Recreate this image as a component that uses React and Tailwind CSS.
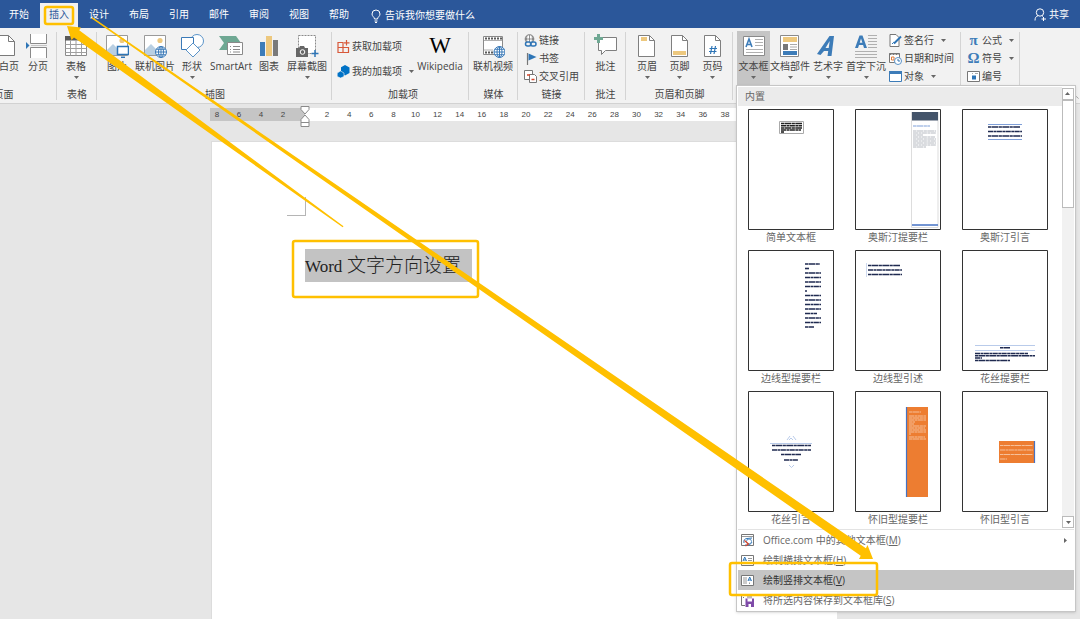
import { ChevronUp } from 'lucide-react';
import clsx from 'clsx';

const TABS = ['开始', '插入', '设计', '布局', '引用', '邮件', '审阅', '视图', '帮助'];
const LEFT_TICKS = [8, 6, 4, 2];
const RIGHT_TICKS = Array.from({ length: 19 }, (_, i) => (i + 1) * 2);

/* ---------- icons ---------- */

const Big = ({ children }) => (
  <svg viewBox="0 0 24 24" className="w-6 h-6 shrink-0" fill="none" aria-hidden="true">{children}</svg>
);

const Small = ({ children }) => (
  <svg viewBox="0 0 13 13" className="w-[13px] h-[13px] shrink-0" fill="none" aria-hidden="true">{children}</svg>
);

const Globe = ({ x, y, r = 5.5 }) => (
  <g transform={`translate(${x} ${y})`} stroke="#3b7ab8" strokeWidth="1">
    <circle r={r} fill="#fff" />
    <ellipse rx={r / 2.2} ry={r} />
    <path d={`M${-r} 0H${r}M0 ${-r}V${r}M${-r * 0.85} ${-r / 2}H${r * 0.85}M${-r * 0.85} ${r / 2}H${r * 0.85}`} />
  </g>
);

const BlankPageIcon = () => (
  <Big><path d="M1.500 1.500h10l6 6v14h-16z" fill="#fff" stroke="#7a7a7a" /><path d="M11.500 1.500v6h6" stroke="#7a7a7a" /></Big>
);

const PageBreakIcon = () => (
  <Big>
    <path d="M4.500 0v9.500h16V0M4.500 24v-10.500h16V24" fill="#fff" stroke="#8a8a8a" />
    <path d="M0 8l3.500 3.500L0 15z" fill="#2e75b6" />
    <path d="M5 11.500h16" stroke="#c5c5c5" />
  </Big>
);

const TableIcon = () => (
  <Big>
    <path d="M1.500 2.500h21v19h-21z" fill="#fff" stroke="#8a8a8a" />
    <path d="M1 2h22v4.500H1z" fill="#595959" />
    <path d="M1.500 10.500h21M1.500 14.500h21M1.500 18.500h21M6.500 6v15.500M12 6v15.500M17.500 6v15.500" stroke="#a0a0a0" />
  </Big>
);

const Picture = () => (
  <>
    <path d="M1.500 1.500h21v20h-21z" fill="#fff" stroke="#9a9a9a" />
    <circle cx="17" cy="6.500" r="2.600" fill="#edc87e" />
    <path d="M2 21v-5l6-6 7 7v4z" fill="#b9cfe2" />
  </>
);

const PictureIcon = () => (
  <Big>
    <Picture />
    <path d="M12.500 12.500h11v8h-11z" fill="#fff" stroke="#2e75b6" strokeWidth="1.500" />
    <path d="M16 23.300h4" stroke="#2e75b6" strokeWidth="1.500" />
  </Big>
);

const OnlinePictureIcon = () => <Big><Picture /><Globe x={18} y={18} /></Big>;

const ShapesIcon = () => (
  <Big>
    <circle cx="17" cy="7" r="6.500" fill="#fff" stroke="#5a93c8" />
    <path d="M1.500 3.500h12v12h-12z" fill="#fff" stroke="#3b7ab8" />
    <path d="M13 9l7 7-7 7-7-7z" fill="#fff" stroke="#5a93c8" />
  </Big>
);

const SmartArtIcon = () => (
  <Big>
    <path d="M0 2h17l5 7-5 7H0l5-7z" fill="#6fa893" />
    <path d="M8.500 8.500h15v12h-15z" fill="#fff" stroke="#8a8a8a" />
    <path d="M11 12.500h1M14 12.500h7M11 15.500h1M14 15.500h7M11 18h1M14 18h7" stroke="#8a8a8a" />
  </Big>
);

const ChartIcon = () => (
  <Big>
    <path d="M3 8h5v14H3z" fill="#3d7cb8" />
    <path d="M9 2h6v20H9z" fill="#edc87e" />
    <path d="M16 6h5v16h-5z" fill="#7a7a7a" />
  </Big>
);

const ScreenshotIcon = () => (
  <Big>
    <path d="M3.500 1.500h17v18h-17z" fill="#fff" stroke="#8a8a8a" strokeDasharray="2 1" />
    <path d="M1 14h3l1-2h4l1 2h3v9H1z" fill="#666" />
    <circle cx="7.500" cy="18" r="2.300" fill="#666" stroke="#fff" />
    <path d="M20 16v7M16.500 19.500h7" stroke="#2e75b6" strokeWidth="1.500" />
  </Big>
);

const StoreIcon = () => (
  <Small>
    <path d="M1 2.500h5v10H1zM1 7.500h10.500v5H1M6 7.500v5h5.500v-5" stroke="#d8593a" strokeWidth="1.200" />
    <path d="M9.500 0v5.500M7 2.800h5.500" stroke="#d8593a" strokeWidth="1.200" />
  </Small>
);

const MyAddinsIcon = () => (
  <Small>
    <path d="M8 0l4.500 2.500v5.500L8 10.500 4 8.300V2.300z" fill="#0072c6" />
    <path d="M3.500 6L7 8v3.500L3.500 13 .200 11.500V8z" fill="#0072c6" stroke="#f2f2f2" strokeWidth=".6" />
  </Small>
);

const OnlineVideoIcon = () => (
  <Big>
    <path d="M2.500 2.500h19v18h-19z" fill="#fff" stroke="#8a8a8a" />
    <path d="M4 4.500h17M4 18.500h9" stroke="#595959" strokeWidth="2" strokeDasharray="2 1" />
    <path d="M3 6.500h18M3 16h9" stroke="#b0b0b0" />
    <Globe x={18.5} y={18} />
  </Big>
);

const LinkIcon = () => (
  <Small>
    <circle cx="5.500" cy="5" r="4.300" fill="#fff" stroke="#777" />
    <path d="M1 5h9M5.500 1v8M3 1.500q-1 3.500 0 7M8 1.500q1 3.500 0 7" stroke="#777" strokeWidth=".8" />
    <rect x="1.500" y="8" width="5.500" height="4" rx="2" stroke="#2e75b6" strokeWidth="1.500" fill="#f2f2f2" />
    <rect x="6.500" y="8" width="5.500" height="4" rx="2" stroke="#2e75b6" strokeWidth="1.500" />
  </Small>
);

const BookmarkIcon = () => (
  <Small><path d="M3.500 1v12" stroke="#777" strokeWidth="1.200" /><path d="M4.500 1.500l8 3.500-8 3.500z" fill="#2e75b6" /></Small>
);

const CrossRefIcon = () => (
  <Small>
    <path d="M.500.500h8v9h-8z" fill="#fff" stroke="#777" />
    <path d="M5.500 4.500h5l2 2v6h-7z" fill="#fff" stroke="#777" />
    <path d="M3 5h3M7.500 9.500h3" stroke="#d8472b" strokeWidth="1.700" />
  </Small>
);

const CommentIcon = () => (
  <Big>
    <path d="M4.500 3.500h18v13h-11l-4 4v-4h-3z" fill="#fff" stroke="#7f7f7f" />
    <path d="M4.500 0v9M0 4.500h9" stroke="#6fa893" strokeWidth="3" />
  </Big>
);

const PageShape = ({ children }) => (
  <Big>
    <path d="M3.500 1.500h11l5 5v16h-16z" fill="#fff" stroke="#7f7f7f" />
    <path d="M14.500 1.500v5h5" stroke="#7f7f7f" />
    {children}
  </Big>
);

const HeaderIcon = () => <PageShape><path d="M6 3h6v4H6z" fill="#edc87e" /></PageShape>;
const FooterIcon = () => <PageShape><path d="M5 17h13v4H5z" fill="#edc87e" /></PageShape>;
const PageNumberIcon = () => (
  <PageShape><path d="M11 12l-1.500 8M14.500 12L13 20M8.500 14.500H16M8 17.500h7.500" stroke="#2e75b6" strokeWidth="1.200" /></PageShape>
);

const TextBoxIcon = () => (
  <Big>
    <path d="M1.500 2.500h21v19h-21z" fill="#fff" stroke="#8a8a8a" />
    <path d="M4 13L7 5l3 8M5 10.500h4" stroke="#3d7cb8" strokeWidth="1.600" />
    <path d="M13 5.500h8M13 8.500h8M13 11.500h8M4 15.500h17M4 18.500h17" stroke="#b0b0b0" />
  </Big>
);

const QuickPartsIcon = () => (
  <Big>
    <path d="M2.500 1.500h18v21h-18z" fill="#fff" stroke="#8a8a8a" />
    <path d="M5 3h14v5H5z" fill="#edc87e" />
    <path d="M5 10h5v6H5z" fill="#777" />
    <path d="M12 10.500h7M12 13h7M12 15.500h7" stroke="#aaa" />
    <path d="M5 17h14v4H5z" fill="#3d7cb8" />
  </Big>
);

const WordArtIcon = () => (
  <Big>
    <path d="M1 20L13.500 2H18l-2.500 20h-4l.700-5H8l-3.500 4zM9.500 14h3.200l1-7z" fill="#3d7cb8" fillRule="evenodd" />
  </Big>
);

const DropCapIcon = () => (
  <Big>
    <path d="M1 14L5.500 1.500h3L13 14h-3l-.900-3H5l-1 3zM5.700 8.700h2.700L7 4.500z" fill="#3d7cb8" fillRule="evenodd" />
    <path d="M14 1.500h9M14 4.500h9M14 7.500h9M14 10.500h9M14 13.500h9M1 17.500h22M1 20.500h22M1 23.500h22" stroke="#b0b0b0" />
  </Big>
);

const SignatureIcon = () => (
  <Small>
    <path d="M1 .500h6l3 3v9H1z" fill="#fff" stroke="#777" />
    <path d="M3 10q2-3 3-1" stroke="#2e75b6" />
    <path d="M5 9.500L12 2.500" stroke="#2e75b6" strokeWidth="2" />
  </Small>
);

const DateIcon = () => (
  <Small>
    <path d="M.500 1.500h10v9H.500z" fill="#fff" stroke="#777" />
    <path d="M.500 2h10" stroke="#777" strokeWidth="2" strokeDasharray="2 1" />
    <path d="M2.500 5h2.500v3H2.500z" stroke="#e07b39" />
    <circle cx="9" cy="9" r="3.500" fill="#fff" stroke="#5a93c8" />
    <path d="M9 7v2h2" stroke="#2e75b6" />
  </Small>
);

const ObjectIcon = () => (
  <Small><path d="M.500 1.500h12v10H.500z" fill="#fff" stroke="#3d7cb8" /><path d="M0 1h13v3H0z" fill="#3d7cb8" /></Small>
);

const NumberIcon = () => (
  <Small>
    <path d="M.500 1.500h12v10H.500z" fill="#fff" stroke="#777" />
    <path d="M5 3.500h1M8 3.500h3" stroke="#aaa" />
    <path d="M5 5.500h4v4H5z" fill="#2e75b6" />
  </Small>
);

const Glyph = ({ children }) => (
  <span className="w-[13px] text-center font-['Liberation_Serif',serif] text-[15px] leading-none font-bold text-[#3d7cb8]">{children}</span>
);

const OfficeIcon = () => (
  <Small>
    <path d="M.500.500h12v11H.500z" fill="#fff" stroke="#777" />
    <path d="M1 2.500h11" stroke="#999" />
    <path d="M3 9q-1-4 3-4.500l5-.500M4 11q5 1 7-3" stroke="#2e75b6" />
    <circle cx="8" cy="7.500" r="2.500" stroke="#5a93c8" />
    <path d="M3.500 6.500l4 3.500-3 2" stroke="#d8472b" strokeWidth="1.200" />
  </Small>
);

const HorizontalBoxIcon = () => (
  <Small>
    <path d="M.500 1.500h12v10H.500z" fill="#fff" stroke="#777" />
    <path d="M2 7l1.700-4L5.500 7M2.500 6H5" stroke="#2e75b6" />
    <path d="M7 4.500h4M7 6.500h4M2 9h9" stroke="#999" />
  </Small>
);

const VerticalBoxIcon = () => (
  <Small>
    <path d="M.500 1.500h12v10H.500z" fill="#fff" stroke="#777" />
    <path d="M7 7l1.700-4 1.800 4M7.500 6H10" stroke="#2e75b6" />
    <path d="M3 3v7M5 3v7M8.500 8.500V10" stroke="#999" />
  </Small>
);

const SaveIcon = () => (
  <Small>
    <path d="M4 .500H.500v11H4M6 1h5M6 3h5M2 3.500h1" stroke="#777" />
    <path d="M4.500 4.500H13V13H4.500z" fill="#7f4ba8" />
    <path d="M6.500 4.500h4.500v3H6.500zM7.500 10h2.500v3H7.500z" fill="#fff" />
  </Small>
);

/* ---------- ribbon parts ---------- */

const Caret = () => (
  <svg viewBox="0 0 5 3" className="w-[5px] h-[3px] shrink-0" aria-hidden="true"><path d="M0 0h5L2.500 3z" fill="#666" /></svg>
);

function BigButton({ icon, label, caret, className = 'w-[38px]', active }) {
  return (
    <button className={clsx('flex flex-col items-center pt-[3px] h-[55px] shrink-0', className, active && 'bg-[#c5c5c5]')}>
      {icon}
      <span className="mt-[1px] h-[14px] leading-[14px]">{label}</span>
      {caret && <span className="mt-[3px]"><Caret /></span>}
    </button>
  );
}

function SmallButton({ icon, label, caret }) {
  return (
    <button className="flex items-center gap-[2px] h-[18px] leading-[18px]">
      {icon}
      <span>{label}</span>
      {caret && <span className="ml-[5px]"><Caret /></span>}
    </button>
  );
}

function Group({ label, className, children }) {
  return (
    <section aria-label={label} className={clsx('relative shrink-0 flex flex-col', className)}>
      <div className="flex h-[55px]">{children}</div>
      <div className="h-[16px] leading-[16px] text-center">{label}</div>
      <span className="absolute right-0 top-[1px] h-[68px] w-px bg-[#d4d4d4]" />
    </section>
  );
}

/* ---------- gallery ---------- */

// rows of tiny dashes standing in for preview text
const Lines = ({ rows, color = '#1f2a50', w = 1.6 }) =>
  rows.map(([x1, x2, y], i) => (
    <path key={i} d={`M${x1} ${y}H${x2}`} stroke={color} strokeWidth={w} strokeDasharray={i % 2 ? '5 .5 3 .4' : '3 .4 7 .5'} />
  ));

const GALLERY = [
  {
    name: '简单文本框',
    art: (
      <>
        <path d="M31.500 12.500h24v12h-24z" fill="#fff" stroke="#aaa" />
        <Lines color="#222" rows={[[33, 54, 14.500], [33, 54, 16.800], [33, 54, 19], [33, 53, 21], [33, 36, 23]]} />
      </>
    ),
  },
  {
    name: '奥斯汀提要栏',
    art: (
      <>
        <path d="M56.500 3v115.500h26.500V3" fill="#fff" stroke="#ddd" />
        <path d="M57 3h26v8.500H57z" fill="#44546a" />
        <Lines color="#a9c0e6" rows={[[58, 75, 17]]} />
        <Lines color="#b5b9c0" w={1} rows={[[58, 81, 22], [58, 81, 24], [58, 68, 26], [58, 80, 28], [58, 81, 30], [58, 81, 32], [58, 81, 34], [58, 81, 36], [58, 71, 38]]} />
        <path d="M57 116h26" stroke="#4472c4" strokeWidth="1.500" />
      </>
    ),
  },
  {
    name: '奥斯汀引言',
    art: (
      <>
        <path d="M26 15.500h34M26 30.500h34" stroke="#7f9fd8" />
        <Lines rows={[[26, 58, 18], [26, 60, 22.500], [26, 60, 27]]} />
      </>
    ),
  },
  {
    name: '边线型提要栏',
    art: (
      <Lines
        rows={[
          [57, 72, 14], [57, 61, 18.500], [57, 73, 23], [57, 73, 27.500], [57, 73, 32], [57, 73, 36.500], [57, 59, 41], [57, 73, 45.500],
          [57, 73, 50], [57, 73, 54.500], [57, 73, 59], [57, 69, 63.500], [57, 73, 68], [57, 73, 72.500], [57, 66, 77],
        ]}
      />
    ),
  },
  {
    name: '边线型引述',
    art: (
      <>
        <path d="M11.500 13v14" stroke="#cdd9ef" />
        <Lines rows={[[13, 45, 15.500], [13, 47, 20], [13, 47, 24.500]]} />
      </>
    ),
  },
  {
    name: '花丝提要栏',
    art: (
      <>
        <path d="M13 95.500h60M13 100.500h60" stroke="#b9cbea" />
        <Lines rows={[[38, 48, 97.800], [13, 66, 103.500], [13, 73, 105.800], [13, 20, 108], [13, 48, 110.500]]} />
      </>
    ),
  },
  {
    name: '花丝引言',
    art: (
      <>
        <path d="M39 49l3-4M48 49l-3-4M41 49l2-2 2 2M22 52.500h42M41 74l2.500 2.500L46 74" stroke="#b9cbea" />
        <Lines rows={[[24, 63, 54.500], [24, 63, 59], [33, 53, 63.500], [36, 50, 69]]} />
      </>
    ),
  },
  {
    name: '怀旧型提要栏',
    art: (
      <>
        <path d="M51 16h22v90H51z" fill="#ed7d31" />
        <path d="M51.500 16v90" stroke="#4472c4" strokeWidth="1.200" />
        <Lines color="#f6c09a" w={1} rows={[[54, 66, 21], [54, 71, 25], [54, 71, 27], [54, 71, 29], [54, 60, 31], [54, 59, 33], [54, 71, 35], [54, 70, 37], [54, 71, 39], [54, 71, 41], [54, 56, 43], [54, 70, 46], [54, 71, 48]]} />
      </>
    ),
  },
  {
    name: '怀旧型引言',
    art: (
      <>
        <path d="M37 50h36v22H37z" fill="#ed7d31" />
        <path d="M72.500 50v22" stroke="#4472c4" strokeWidth="1.200" />
        <Lines color="#f6c09a" w={1} rows={[[38, 71, 54.500], [38, 71, 59], [38, 71, 63.500], [38, 45, 68]]} />
      </>
    ),
  },
];

const MENU = [
  { icon: <OfficeIcon />, text: 'Office.com 中的其他文本框', hot: 'M', more: true },
  { icon: <HorizontalBoxIcon />, text: '绘制横排文本框', hot: 'H' },
  { icon: <VerticalBoxIcon />, text: '绘制竖排文本框', hot: 'V', selected: true },
  { icon: <SaveIcon />, text: '将所选内容保存到文本框库', hot: 'S' },
];

function TextBoxMenu() {
  return (
    <div className="absolute left-[-1px] top-[54px] z-10 w-[340px] bg-white border border-[#c6c6c6] shadow-sm p-[1px] text-[#666]">
      <div className="flex border-b border-[#e3e3e3]">
        <div className="flex-1">
          <h2 className="h-[19px] leading-[18px] pl-[7px] bg-[#ebebeb]">内置</h2>
          <div className="flex flex-wrap gap-x-[21px] gap-y-[6px] pt-[3px] pl-[10px] pb-[3px]">
            {GALLERY.map(({ name, art }) => (
              <button key={name} className="flex flex-col w-[86px] h-[135px]">
                <svg viewBox="0 0 86 121" className="w-[86px] h-[121px]" fill="none" aria-hidden="true">
                  <path d="M.500.500h85v120H.500z" fill="#fff" stroke="#333" />
                  {art}
                </svg>
                <span className="w-full leading-[14px]">{name}</span>
              </button>
            ))}
          </div>
        </div>
        <div className="w-3 mt-[1px] mb-[1px] bg-[#f1f1f1] flex flex-col">
          <button aria-label="向上滚动" className="h-3 bg-white border border-[#bbb] flex items-center justify-center rotate-180"><Caret /></button>
          <div className="h-[108px] bg-white border border-[#bbb]" />
          <button aria-label="向下滚动" className="mt-auto h-3 bg-white border border-[#bbb] flex items-center justify-center"><Caret /></button>
        </div>
      </div>
      <ul>
        {MENU.map(({ icon, text, hot, more, selected }) => (
          <li key={hot}>
            <button className={clsx('w-full h-[20px] pl-[3px] pr-[6px] flex items-center gap-[9px] text-left', selected && 'bg-[#c5c5c5] text-[#333]')}>
              {icon}
              <span>{text}(<u>{hot}</u>)</span>
              {more && <span className="ml-auto -rotate-90"><Caret /></span>}
            </button>
          </li>
        ))}
      </ul>
    </div>
  );
}

function Ribbon() {
  return (
    <div className="flex h-[76px] pt-[3px] bg-[#f2f2f2] border-b border-[#d2d2d2]">
      <Group label="页面" className="w-[107px] -ml-[50px]">
        <div className="flex ml-auto">
          <BigButton icon={<BlankPageIcon />} label="白页" className="w-[20px]" />
          <BigButton icon={<PageBreakIcon />} label="分页" />
        </div>
      </Group>
      <Group label="表格" className="w-[40px]">
        <BigButton icon={<TableIcon />} label="表格" caret />
      </Group>
      <Group label="插图" className="w-[235px] pl-[1px]">
        <BigButton icon={<PictureIcon />} label="图片" />
        <BigButton icon={<OnlinePictureIcon />} label="联机图片" />
        <BigButton icon={<ShapesIcon />} label="形状" caret className="w-[36px]" />
        <BigButton icon={<SmartArtIcon />} label="SmartArt" className="w-[42px]" />
        <BigButton icon={<ChartIcon />} label="图表" className="w-[34px]" />
        <BigButton icon={<ScreenshotIcon />} label="屏幕截图" caret className="w-[42px]" />
      </Group>
      <Group label="加载项" className="w-[137px] pl-[5px]">
        <div className="flex flex-col gap-[7px] pt-[6px] w-[80px]">
          <SmallButton icon={<StoreIcon />} label="获取加载项" />
          <SmallButton icon={<MyAddinsIcon />} label="我的加载项" caret />
        </div>
        <BigButton
          icon={<span className="h-6 leading-6 font-['Liberation_Serif',serif] text-[23px] text-black">W</span>}
          label="Wikipedia"
          className="w-[46px]"
        />
      </Group>
      <Group label="媒体" className="w-[49px] pl-[5px] pr-[5px]">
        <BigButton icon={<OnlineVideoIcon />} label="联机视频" />
      </Group>
      <Group label="链接" className="w-[67px]">
        <div className="flex flex-col pl-[6px]">
          <SmallButton icon={<LinkIcon />} label="链接" />
          <SmallButton icon={<BookmarkIcon />} label="书签" />
          <SmallButton icon={<CrossRefIcon />} label="交叉引用" />
        </div>
      </Group>
      <Group label="批注" className="w-[41px]">
        <BigButton icon={<CommentIcon />} label="批注" className="w-full" />
      </Group>
      <Group label="页眉和页脚" className="w-[107px] pl-[5px] pr-[5px]">
        <BigButton icon={<HeaderIcon />} label="页眉" caret className="w-[32px]" />
        <BigButton icon={<FooterIcon />} label="页脚" caret className="w-[33px]" />
        <BigButton icon={<PageNumberIcon />} label="页码" caret className="w-[33px]" />
      </Group>
      <Group label="文本" className="w-[228px] pl-[4px]">
        <div className="relative">
          <BigButton icon={<TextBoxIcon />} label="文本框" caret active className="w-[33px]" />
          <TextBoxMenu />
        </div>
        <BigButton icon={<QuickPartsIcon />} label="文档部件" caret className="w-[40px]" />
        <BigButton icon={<WordArtIcon />} label="艺术字" caret className="w-[36px]" />
        <BigButton icon={<DropCapIcon />} label="首字下沉" caret className="w-[40px]" />
        <div className="flex flex-col pl-[3px]">
          <SmallButton icon={<SignatureIcon />} label="签名行" caret />
          <SmallButton icon={<DateIcon />} label="日期和时间" />
          <SmallButton icon={<ObjectIcon />} label="对象" caret />
        </div>
      </Group>
      <Group label="符号" className="w-[59px]">
        <div className="flex flex-col pl-[6px]">
          <SmallButton icon={<Glyph>π</Glyph>} label="公式" caret />
          <SmallButton icon={<Glyph>Ω</Glyph>} label="符号" caret />
          <SmallButton icon={<NumberIcon />} label="编号" />
        </div>
      </Group>
      <button aria-label="折叠功能区" className="ml-auto self-end pb-[2px] text-[#666]"><ChevronUp size={7} /></button>
    </div>
  );
}

function Ruler() {
  return (
    <div className="relative mt-[4px] ml-[210px] flex h-[13px] text-[8px] leading-[13px] text-[#444] font-['Liberation_Sans',sans-serif]">
      <div className="w-[95px] pr-[11px] bg-[#c5c5c5] flex justify-end">
        {LEFT_TICKS.map((n) => <span key={n} className="w-[22px] shrink-0 text-center">{n}</span>)}
      </div>
      <div className="w-[500px] pl-[11px] bg-white">
        <div className="grid w-[420px] grid-cols-[repeat(19,1fr)] text-center">
          {RIGHT_TICKS.map((n) => <span key={n}>{n}</span>)}
        </div>
      </div>
      <svg viewBox="0 0 10 22" className="absolute left-[90px] top-[-2px] w-[10px] h-[22px]" aria-hidden="true">
        <path d="M1 .500h8v3L5 8 1 3.500zM1 13.500L5 9l4 4.500v7H1zM1 16.500h8" fill="#fff" stroke="#8a8a8a" />
      </svg>
    </div>
  );
}

// yellow call-outs and tapered arrows drawn on top of everything
function Annotations() {
  return (
    <svg viewBox="0 0 1080 619" className="absolute left-0 top-0 z-20 w-[1080px] h-[619px] pointer-events-none" fill="none" aria-hidden="true">
      <g stroke="#ffc000" strokeWidth="2.500">
        <rect x="45" y="7" width="28" height="17" rx="2" />
        <rect x="293" y="241" width="185" height="56" rx="2" />
        <rect x="730" y="563" width="147" height="32" rx="2" />
      </g>
      <g fill="#ffc000">
        <path d="M67 26l14 1.500-1.800 2.700L343.500 226.300l-.800 1L74 37.500l-2.500 2.500z" />
        <path d="M92.500 17.300L865.900 548.300l1.600-3.300 5.500 14h-14l1.700-3.300L91.700 18.500z" />
      </g>
    </svg>
  );
}

function App() {
  return (
    <div className="relative min-h-screen flex flex-col overflow-hidden bg-[#e6e6e6] text-[10px] text-[#444] font-['Open_Sans','Noto_Sans_CJK_SC',sans-serif] whitespace-nowrap">
      <header className="h-[28px] flex items-end bg-[#2b579a] text-white">
        <nav className="flex gap-[2px]">
          {TABS.map((tab) => (
            <button key={tab} className={clsx('w-[38px] h-[25px] pb-[3px] leading-[22px]', tab === '插入' && 'bg-[#f2f2f2] text-[#2b579a]')}>
              {tab}
            </button>
          ))}
        </nav>
        <button className="ml-[13px] h-[25px] flex items-center gap-[4px]">
          <svg viewBox="0 0 10 14" className="w-[10px] h-[14px]" fill="none" stroke="#fff" aria-hidden="true">
            <path d="M3.500 10c0-2-2.500-2.500-2.500-5a4 4 0 018 0c0 2.500-2.500 3-2.500 5zM3.500 12h3M4 13.500h2" />
          </svg>
          告诉我你想要做什么
        </button>
        <button className="ml-auto mr-[11px] h-[28px] flex items-center gap-[3px]">
          <svg viewBox="0 0 12 13" className="w-[12px] h-[13px]" fill="none" stroke="#fff" aria-hidden="true">
            <circle cx="6" cy="4.500" r="3.700" />
            <path d="M1 12.500c0-3 1-4 3-4.800M8 7.700l1 .800M9.500 9v4M7.500 11h4.500" />
          </svg>
          共享
        </button>
      </header>
      <Ribbon />
      <Ruler />
      <main className="mt-[20px] ml-[211px] w-[626px] flex-1 bg-white border-l border-t border-[#dcdcdc] pl-[93px] pt-[55px]">
        <div className="-ml-[18px] w-[19px] h-[19px] border-r border-b border-[#b5b5b5]" />
        <p className="mt-[33px] w-[167px] h-[33px] leading-[33px] bg-[#c3c3c3] text-[19px] font-light text-[#222] font-['Liberation_Serif','Noto_Sans_CJK_SC',serif]">
          <span className="text-[17px]">Word</span> 文字方向设置
        </p>
      </main>
      <Annotations />
    </div>
  );
}

export default App;
